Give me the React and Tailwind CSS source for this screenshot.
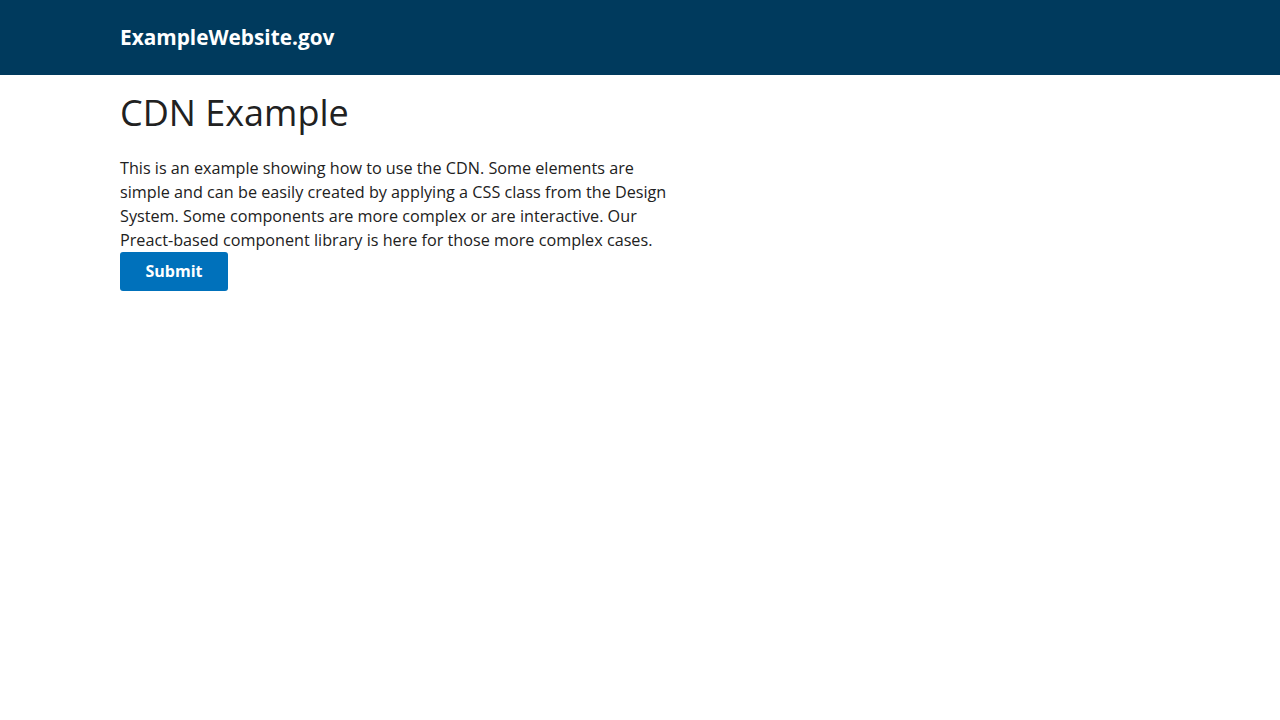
export default function App() {
  return (
    <div className="min-h-[720px] bg-white" style={{ fontFamily: '"Open Sans", sans-serif' }}>
      <header className="h-[75px] bg-[#003a5d] flex items-center">
        <div className="px-[120px] pb-[1px] text-white text-[20.8px] font-bold leading-none">ExampleWebsite.gov</div>
      </header>
      <main className="px-[120px] text-[#212121]">
        <h1 className="mt-[14px] text-[36px] leading-[48px] font-normal">CDN Example</h1>
        <p className="mt-[19px] max-w-[560px] text-[16.2px] leading-[24px]">
          This is an example showing how to use the CDN. Some elements are simple and can be easily created by applying a CSS class from the Design System. Some components are more complex or are interactive. Our Preact-based component library is here for those more complex cases.
        </p>
        <button className="h-[39px] w-[108px] pb-[1px] rounded-[3px] bg-[#0071bb] text-white font-bold text-[16px] leading-none">Submit</button>
      </main>
    </div>
  );
}
